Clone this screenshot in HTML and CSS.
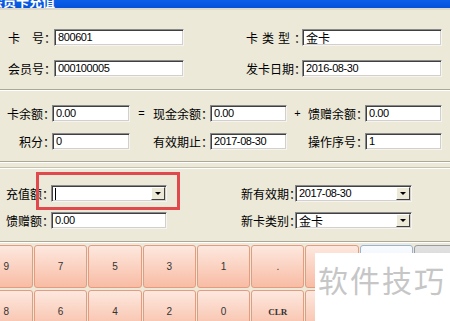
FILE: index.html
```html
<!DOCTYPE html>
<html lang="zh-CN">
<head>
  <meta charset="UTF-8" />
  <title>会员卡充值</title>
  <link rel="stylesheet" href="styles.css">
</head>
<body>
  <div class="titlebar"><span class="title">会员卡充值</span></div>

  <div class="info">
    <span class="lbl">卡　号：</span>
    <div class="field">800601</div>
    <span></span>
    <span class="lbl"><span class="spaced">卡类型</span>：</span>
    <div class="field cjk">金卡</div>

    <span class="lbl">会员号：</span>
    <div class="field">000100005</div>
    <span></span>
    <span class="lbl">发卡日期：</span>
    <div class="field">2016-08-30</div>
  </div>

  <div class="sep"></div>

  <div class="balances">
    <span class="lbl right">卡余额：</span>
    <div class="field">0.00</div>
    <span class="op">=</span>
    <span class="lbl">现金余额：</span>
    <div class="field">0.00</div>
    <span class="op">+</span>
    <span class="lbl">馈赠余额：</span>
    <div class="field">0.00</div>

    <span class="lbl right">积分：</span>
    <div class="field">0</div>
    <span></span>
    <span class="lbl">有效期止：</span>
    <div class="field">2017-08-30</div>
    <span></span>
    <span class="lbl">操作序号：</span>
    <div class="field">1</div>
  </div>

  <div class="sep"></div>
  <div class="sep light"></div>

  <div class="recharge">
    <span class="lbl">充值额：</span>
    <div class="field combo"><span class="value"><i class="caret"></i></span><span class="drop"></span></div>
    <span></span>
    <span class="lbl">新有效期：</span>
    <div class="field combo"><span class="value">2017-08-30</span><span class="drop"></span></div>

    <span class="lbl">馈赠额：</span>
    <div class="field">0.00</div>
    <span></span>
    <span class="lbl">新卡类别：</span>
    <div class="field combo"><span class="value cjk">金卡</span><span class="drop"></span></div>
  </div>

  <div class="sep"></div>

  <div class="keypad">
    <button class="key">9</button>
    <button class="key">7</button>
    <button class="key">5</button>
    <button class="key">3</button>
    <button class="key">1</button>
    <button class="key">.</button>
    <button class="key"></button>
    <button class="key blue"></button>
    <button class="key gray"></button>
    <button class="key">8</button>
    <button class="key">6</button>
    <button class="key">4</button>
    <button class="key">2</button>
    <button class="key">0</button>
    <button class="key clr">CLR</button>
    <button class="key"></button>
    <button class="key blue"></button>
    <button class="key gray"></button>
  </div>

  <!-- overlays -->
  <div class="highlight"></div>
  <div class="watermark">软件技巧</div>
</body>
</html>
```

FILE: styles.css
```css
* {
  box-sizing: border-box;
}

body {
  margin: 0;
  width: 450px;
  height: 321px;
  overflow: hidden;
  position: relative;
  background: #ece9d8;
  font-family: "Noto Sans CJK SC", sans-serif;
  font-size: 12px;
  color: #000;
}

.titlebar {
  height: 10px;
  background: linear-gradient(#0a5fe8, #0552dc);
  border-bottom: 2px solid #dcd9cb;
  overflow: hidden;
}

.title {
  display: block;
  color: #fff;
  font-weight: bold;
  font-size: 13px;
  line-height: 13px;
  margin-top: -6px;
  margin-left: -10px;
}

.lbl {
  line-height: 17px;
  white-space: nowrap;
}

.lbl.right {
  justify-self: end;
  margin-right: -3px;
}

.spaced {
  letter-spacing: 4px;
}

.field {
  height: 17px;
  background: #fff;
  border: 1px solid;
  border-color: #8a8a8a #f4f4f4 #f4f4f4 #8a8a8a;
  box-shadow: inset 1px 1px 0 #404040, inset -1px -1px 0 #d4d0c8;
  font-family: "Liberation Sans", sans-serif;
  font-size: 11px;
  line-height: 15px;
  padding-left: 3px;
  letter-spacing: -0.4px;
  white-space: nowrap;
  overflow: hidden;
}

.cjk {
  font-family: "Noto Sans CJK SC", sans-serif;
  font-size: 12px;
  letter-spacing: 0;
}

.info {
  display: grid;
  grid-template-columns: 46px 130px 62px 56px 140px;
  grid-auto-rows: 17px;
  row-gap: 14px;
  padding: 19px 0 12px 8px;
}

.sep {
  height: 2px;
  border-top: 1px solid #aca899;
  border-bottom: 1px solid #fff;
}

.sep.light {
  margin-top: 4px;
  border-top-color: #c5c2b2;
}

.balances {
  display: grid;
  grid-template-columns: 52px 78px 23px 57px 77px 21px 57px 77px;
  grid-auto-rows: 17px;
  row-gap: 11px;
  padding: 14px 0 11px 0;
}

.op {
  text-align: center;
  line-height: 17px;
  font-family: "Liberation Sans", sans-serif;
  font-size: 11px;
}

.recharge {
  display: grid;
  grid-template-columns: 45px 116px 74px 54px 117px;
  grid-auto-rows: 17px;
  row-gap: 10px;
  padding: 16px 0 12px 6px;
}

.combo {
  display: flex;
  padding-right: 1px;
}

.combo .value {
  flex: 1;
  display: flex;
  align-items: center;
}

.caret {
  display: block;
  width: 1px;
  height: 12px;
  background: #000;
}

.drop {
  width: 14px;
  height: 13px;
  margin-top: 1px;
  background: #ece9d8;
  border: 1px solid;
  border-color: #fff #404040 #404040 #fff;
  display: flex;
  align-items: center;
  justify-content: center;
}

.drop::after {
  content: "";
  border-left: 3px solid transparent;
  border-right: 3px solid transparent;
  border-top: 3px solid #000;
}

.keypad {
  display: grid;
  grid-template-columns: repeat(9, 53.3px);
  grid-auto-rows: 43px;
  gap: 2px 1px;
  margin-top: 2px;
  margin-left: -20.3px;
}

.key {
  border: 1px solid #e49c80;
  border-radius: 3px;
  background: linear-gradient(#fde8df, #f8bca4);
  font-family: "Liberation Sans", sans-serif;
  font-size: 10px;
  color: #333;
  padding: 0;
}

.key.clr {
  font-family: "Liberation Serif", serif;
  font-weight: bold;
  font-size: 9px;
}

.key.blue {
  background: linear-gradient(#f8fbff, #e4edf8);
  border-color: #98b4d4;
}

.key.gray {
  background: linear-gradient(#e2e2e2, #c8c8c8);
  border-color: #9c9c9c;
}

.highlight {
  position: absolute;
  left: 36px;
  top: 172px;
  width: 144px;
  height: 38px;
  border: 3px solid #e14a4c;
}

.watermark {
  position: absolute;
  left: 315px;
  top: 253px;
  width: 135px;
  height: 68px;
  background: #fff;
  color: #c6c6c6;
  font-size: 30px;
  line-height: 30px;
  letter-spacing: 2px;
  padding: 11px 0 0 3px;
  white-space: nowrap;
}
```
